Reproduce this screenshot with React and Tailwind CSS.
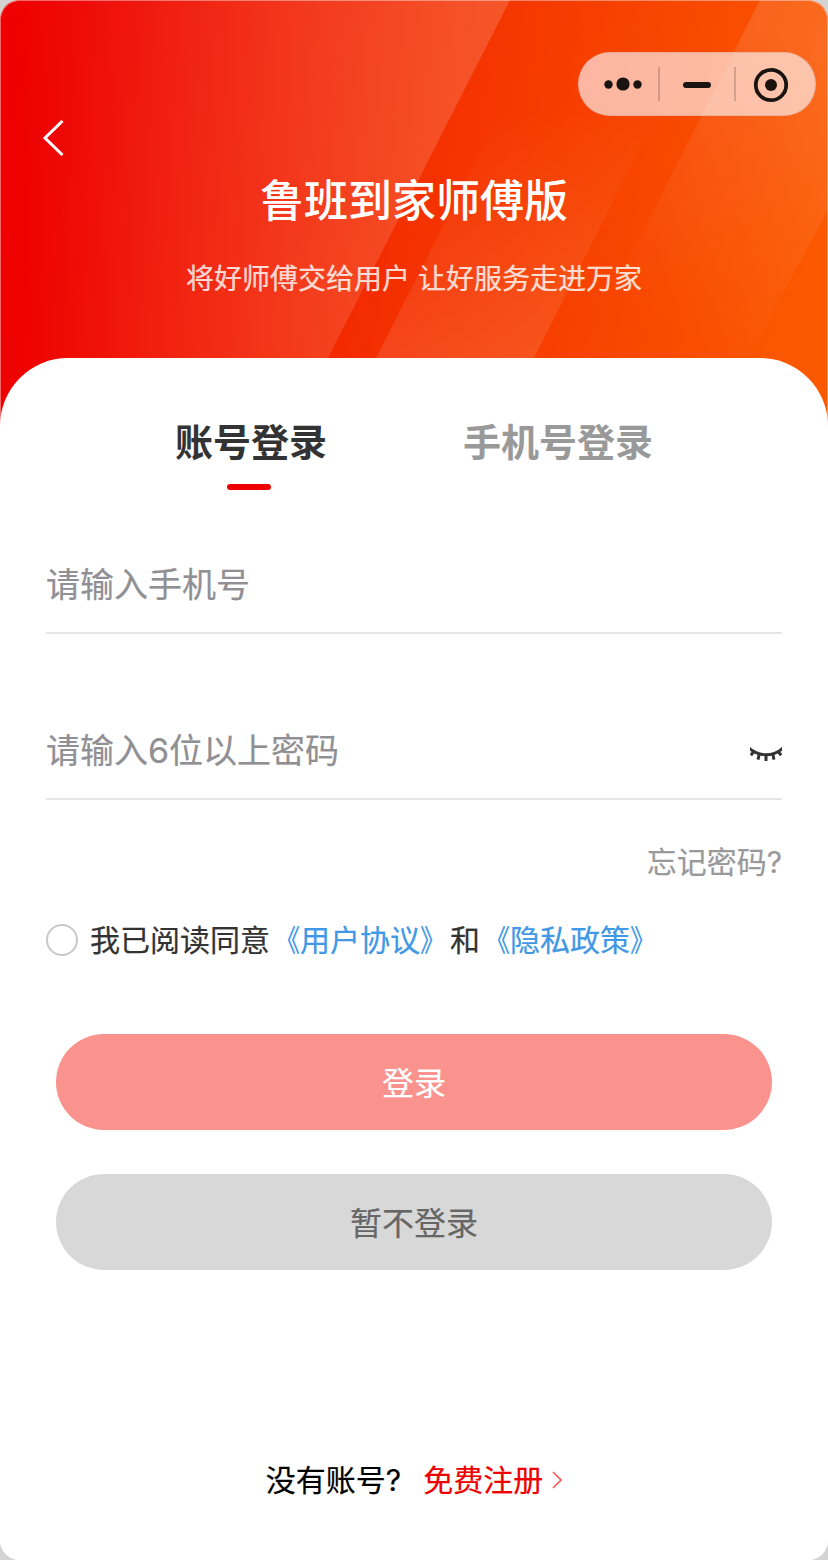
import { useState } from 'react';

const tabs = [
    { key: 'account', label: '账号登录' },
    { key: 'phone', label: '手机号登录' },
];

function HeaderBackground() {
    return (
        <svg className="absolute inset-0 h-full w-full" viewBox="0 0 828 430" preserveAspectRatio="none">
            <defs>
                <linearGradient id="base" gradientUnits="userSpaceOnUse" x1="0" y1="150" x2="820" y2="270">
                    <stop offset="0" stopColor="#ee0000" />
                    <stop offset="0.08" stopColor="#ee0400" />
                    <stop offset="0.5" stopColor="#f43000" />
                    <stop offset="1" stopColor="#fb5900" />
                </linearGradient>
                <linearGradient id="left" gradientUnits="userSpaceOnUse" x1="20" y1="180" x2="490" y2="150">
                    <stop offset="0" stopColor="#fff" stopOpacity="0" />
                    <stop offset="1" stopColor="#f8c0b8" stopOpacity="0.22" />
                </linearGradient>
                <linearGradient id="middle" gradientUnits="userSpaceOnUse" x1="0" y1="110" x2="0" y2="358">
                    <stop offset="0" stopColor="#fff" stopOpacity="0" />
                    <stop offset="1" stopColor="#fff" stopOpacity="0.11" />
                </linearGradient>
                <linearGradient id="right" gradientUnits="userSpaceOnUse" x1="828" y1="60" x2="670" y2="330">
                    <stop offset="0" stopColor="#f8fafc" stopOpacity="0.12" />
                    <stop offset="1" stopColor="#f8fafc" stopOpacity="0" />
                </linearGradient>
            </defs>
            <rect width="828" height="430" fill="url(#base)" />
            <path d="M0 0H510L328 358L292 430H0Z" fill="url(#left)" />
            <path d="M502 110H659L534 358L498 430H340L376 358Z" fill="url(#middle)" />
            <path d="M760 0H828V210L748 358H579Z" fill="url(#right)" />
        </svg>
    );
}

function Capsule() {
    return (
        <div className="flex h-16 w-[238px] items-center rounded-full border border-[#dfa594]/60 bg-[#fffcff]/63">
            <svg width="236" height="62" viewBox="579 53 236 62" fill="#1a1410">
                <circle cx="608.5" cy="84.5" r="4.2" />
                <circle cx="623" cy="84" r="6.6" />
                <circle cx="637.5" cy="84.5" r="4.2" />
                <path d="M659 67V101M735 67V101" stroke="#000" strokeOpacity="0.17" strokeWidth="2" />
                <rect x="683" y="82" width="28" height="6" rx="3" />
                <circle cx="771" cy="85" r="15.2" fill="none" stroke="#1a1410" strokeWidth="3.8" />
                <circle cx="771" cy="85" r="6" />
            </svg>
        </div>
    );
}

function ClosedEye() {
    return (
        <svg width="32" height="16" viewBox="0 0 32 16" fill="none" stroke="#333" strokeWidth="2.8">
            <path d="M-1 1C9 10 23 10 33 1" />
            <path d="M4 4.5L0.8 8.2M9.2 7L8 12.6M16 8V14M22.8 7L24 12.6M28 4.5L31.2 8.2" strokeWidth="3" />
        </svg>
    );
}

function AgreementLink({ name }) {
    return (
        <a className="flex text-[#4098e6]">
            <span className="origin-right scale-x-[0.86]">《</span>
            {name}
            <span className="origin-left scale-x-[0.86]">》</span>
        </a>
    );
}

export default function App() {
    const [activeTab, setActiveTab] = useState('account');
    const [agreed, setAgreed] = useState(false);

    return (
        <div className="h-[1560px] w-[828px] bg-[#d3d3d3] font-['Inter','Noto_Sans_CJK_SC',sans-serif] [-webkit-text-stroke:0.2px]">
            <div className="relative flex h-full flex-col overflow-hidden rounded-[20px] bg-white">
                <header className="relative h-[430px] shrink-0">
                    <HeaderBackground />
                    <div className="relative flex h-full flex-col">
                        <div className="flex justify-end pt-[52px] pr-3">
                            <Capsule />
                        </div>
                        <button className="mt-1 ml-[42px] h-9 w-6">
                            <svg width="22" height="36" viewBox="0 0 22 36" fill="none" stroke="#fff" strokeWidth="3">
                                <path d="M20.5 1L3 18L20.5 35" />
                            </svg>
                        </button>
                        <h1 className="mt-[15px] text-center text-[44px] leading-[60px] font-medium text-white [-webkit-text-stroke:0px]">鲁班到家师傅版</h1>
                        <p className="mt-[28px] text-center text-[28px] leading-10 text-white/80">将好师傅交给用户 让好服务走进万家</p>
                    </div>
                </header>

                <main className="relative -mt-[72px] flex flex-1 flex-col rounded-t-[68px] bg-white px-[46px]">
                    <div className="flex pt-[57px] pl-[129px] [-webkit-text-stroke:0px]">
                        {tabs.map((tab) => (
                            <button
                                key={tab.key}
                                onClick={() => setActiveTab(tab.key)}
                                className={`mr-[136px] flex flex-col items-center text-[38px] leading-[54px] font-bold whitespace-nowrap ${activeTab === tab.key ? 'text-[#333]' : 'text-[#999]'}`}
                            >
                                {tab.label}
                                {activeTab === tab.key && <span className="mt-[15px] mr-1 h-[6px] w-11 rounded-full bg-[#ee0000]" />}
                            </button>
                        ))}
                    </div>

                    <div className="mt-[60px] flex h-[84px] items-start border-b-2 border-[#e5e5e5]">
                        <input
                            type="tel"
                            placeholder="请输入手机号"
                            className="h-[68px] w-full text-[34px] outline-none placeholder:text-[#909094]"
                        />
                    </div>
                    <div className="mt-[82px] flex h-[84px] items-start border-b-2 border-[#e5e5e5]">
                        <input
                            type="password"
                            placeholder="请输入6位以上密码"
                            className="h-[68px] flex-1 text-[34px] outline-none placeholder:text-[#909094]"
                        />
                        <button className="mt-[31px]">
                            <ClosedEye />
                        </button>
                    </div>

                    <a className="mt-[40px] self-end text-[30px] leading-[44px] text-[#999]">忘记密码?</a>

                    <div className="mt-[34px] flex items-center text-[30px] leading-[44px] text-[#333]">
                        <button
                            onClick={() => setAgreed(!agreed)}
                            className={`mr-3 h-8 w-8 rounded-full border-2 border-[#c8c8c8] ${agreed ? 'bg-[#ee0000]' : 'bg-white'}`}
                        />
                        <span>我已阅读同意</span>
                        <AgreementLink name="用户协议" />
                        <span>和</span>
                        <AgreementLink name="隐私政策" />
                    </div>

                    <div className="mt-[72px] flex flex-col gap-11 px-[10px] text-[32px]">
                        <button className="h-24 rounded-full bg-[#fa938d] pt-[3px] text-white">登录</button>
                        <button className="h-24 rounded-full bg-[#d8d8d8] pt-[3px] text-[#666]">暂不登录</button>
                    </div>

                    <div className="mt-[188px] flex items-center justify-center text-[30px] leading-[44px] text-black">
                        <span>没有账号?</span>
                        <a className="ml-[22px] flex items-center text-[#ee0000]">
                            免费注册
                            <svg className="ml-[9px]" width="10" height="18" viewBox="0 0 10 18" fill="none" stroke="#f45b55" strokeWidth="1.6">
                                <path d="M1 1L9 9L1 17" />
                            </svg>
                        </a>
                    </div>
                </main>

                {/* thin highlight along the window frame */}
                <div className="pointer-events-none absolute inset-0 rounded-[20px] border border-white/40" />
            </div>
        </div>
    );
}
